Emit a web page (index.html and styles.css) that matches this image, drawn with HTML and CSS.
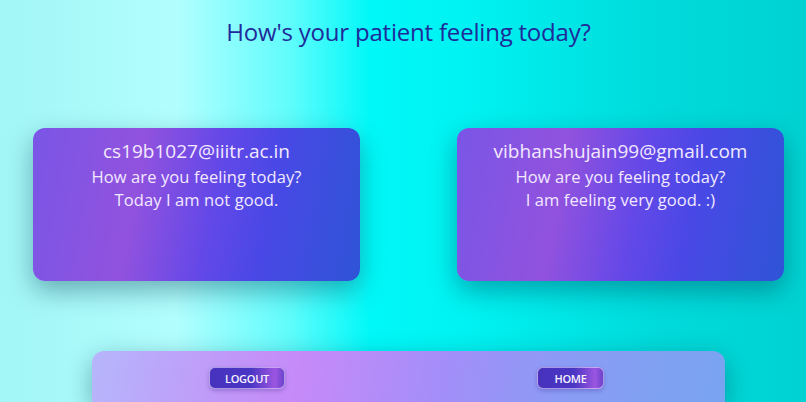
FILE: index.html
```html
<!DOCTYPE html>
<html lang="en">
<head>
<meta charset="utf-8">
<title>Patient feelings</title>
<link rel="stylesheet" href="styles.css">
</head>
<body>
<div class="page">
  <h1 class="title">How's your patient feeling today?</h1>
  <div class="cards">
    <div class="card">
      <div class="email">cs19b1027@iiitr.ac.in</div>
      <div class="msg">
        <p class="line">How are you feeling today?</p>
        <p class="line">Today I am not good.</p>
      </div>
    </div>
    <div class="card">
      <div class="email">vibhanshujain99@gmail.com</div>
      <div class="msg">
        <p class="line">How are you feeling today?</p>
        <p class="line">I am feeling very good. :)</p>
      </div>
    </div>
  </div>
  <div class="bar">
    <button class="btn btn-logout">LOGOUT</button>
    <button class="btn btn-home">HOME</button>
  </div>
</div>
</body>
</html>
```
FILE: styles.css
```css
html, body {
  margin: 0;
  padding: 0;
  height: 100%;
  overflow: hidden;
}
body {
  background: linear-gradient(to right, #a2f6f6 0%, #b2fefe 22%, #60fcfc 36%, #00f8f8 46%, #00f2f2 58%, #00dada 82%, #00d2d2 100%);
  font-family: "Open Sans", "Noto Sans", sans-serif;
}
.page {
  padding-left: 11px;
  display: flex;
  flex-direction: column;
  align-items: center;
}
.title {
  margin: 17px 0 0;
  font-size: 24px;
  line-height: 29px;
  font-weight: 400;
  color: #1f2b99;
  letter-spacing: -0.2px;
}
.cards {
  display: flex;
  gap: 97px;
  margin-top: 82px;
}
.card {
  width: 327px;
  height: 153px;
  box-sizing: border-box;
  border-radius: 12px;
  background: linear-gradient(100deg, #7a56e6 0%, #9152de 32%, #6248e8 55%, #4a48e6 70%, #2e54d6 100%);
  box-shadow: 0 10px 26px rgba(0, 60, 80, 0.4);
  color: #f3e9ff;
  text-align: center;
  padding-top: 11px;
}
.email {
  font-size: 19px;
  line-height: 24px;
}
.msg {
  margin-top: 3px;
  font-size: 16.5px;
  letter-spacing: 0.1px;
}
.line {
  margin: 0;
  line-height: 22.5px;
}
.bar {
  margin-top: 70px;
  width: 633px;
  height: 51px;
  border-radius: 12px 12px 0 0;
  background: linear-gradient(100deg, #b6b6fb 0%, #c293f8 25%, #c68af8 33%, #a48ef9 55%, #8a9cf5 75%, #78a4f0 100%);
  box-shadow: 0 8px 26px rgba(0, 60, 80, 0.4);
  display: flex;
  align-items: flex-start;
  gap: 252px;
  padding: 16px 0 0 117px;
  box-sizing: border-box;
}
.btn {
  height: 22px;
  border: 1px solid rgba(235, 220, 255, 0.6);
  border-radius: 6px;
  background: linear-gradient(to right, #4632bc 0%, #4a36c4 55%, #9c56e0 88%, #6c42cc 100%);
  color: #f6f2ff;
  font-family: "Open Sans", "Noto Sans", sans-serif;
  font-weight: 600;
  font-size: 11px;
  letter-spacing: -0.3px;
  padding: 0;
  box-shadow: 0 2px 4px rgba(60, 40, 140, 0.3);
}
.btn-logout { width: 76px; }
.btn-home { width: 67px; }
```
